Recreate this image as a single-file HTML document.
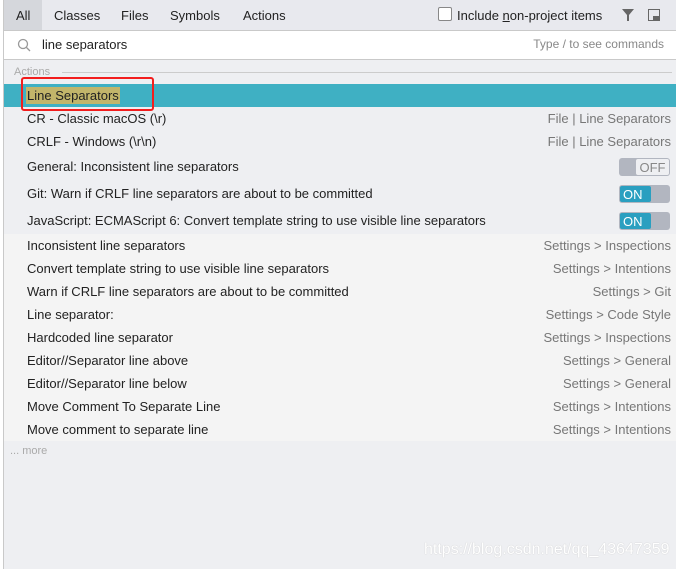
<!DOCTYPE html><html><head><style>
body{margin:0;width:676px;height:569px;overflow:hidden;background:#eeeff2;font-family:"Liberation Sans",sans-serif;font-size:13px;color:#222;position:relative}
.lb{position:absolute;left:0;top:0;width:3px;height:569px;background:#fff;border-right:1px solid #c9c9c9}
.top{position:absolute;left:4px;top:0;width:672px;height:30px;background:#e8e9ee;border-bottom:1px solid #c9c9c9}
.tab{position:absolute;top:8px}
.srch{position:absolute;left:4px;top:31px;width:672px;height:28px;background:#fff;border-bottom:1px solid #c9c9c9}
.r{position:absolute;left:4px;width:672px;height:23px;line-height:23px}
.r .t{position:absolute;left:23px}
.r .h{position:absolute;right:5px;color:#777}
.tg{position:absolute;right:6px;top:3px;width:51px;height:18px;border-radius:3px;background:#b2b6c0;font-size:13px;line-height:18px}
.on{position:absolute;left:1px;top:1px;width:31px;height:16px;background:#2a9fc0;color:#fff;padding-left:3px;box-sizing:border-box;border-radius:2px}
.off{position:absolute;right:1px;top:1px;width:33px;height:16px;background:#eeeff2;color:#888;text-align:center;border-radius:2px}
</style></head><body>
<div class="lb"></div>
<div class="top">
<div style="position:absolute;left:0;top:0;width:38px;height:30px;background:#d5d7dc"></div>
<span class="tab" style="left:12px">All</span><span class="tab" style="left:50px">Classes</span><span class="tab" style="left:117px">Files</span><span class="tab" style="left:166px">Symbols</span><span class="tab" style="left:239px">Actions</span>
<div style="position:absolute;left:434px;top:7px;width:12px;height:12px;border:1px solid #888;border-radius:2px;background:#fff"></div>
<span class="tab" style="left:453px">Include <u>n</u>on-project items</span>
<svg style="position:absolute;left:617px;top:8px" width="14" height="14"><path d="M1 1H13L8 7V13H6V7Z" fill="#666"/></svg>
<div style="position:absolute;left:644px;top:9px;width:10px;height:10px;border:1.5px solid #666"><div style="position:absolute;right:0;bottom:0;width:6px;height:4px;background:#666"></div></div>
</div>
<div class="srch">
<svg style="position:absolute;left:13px;top:7px" width="14" height="14"><circle cx="6" cy="6" r="4.5" fill="none" stroke="#999" stroke-width="1.3"/><path d="M9.5 9.5L13 13" stroke="#999" stroke-width="1.3"/></svg>
<span style="position:absolute;left:38px;top:6px">line separators</span>
<span style="position:absolute;right:12px;top:6px;font-size:12px;color:#888">Type / to see commands</span>
</div>
<span style="position:absolute;left:14px;top:66px;font-size:11px;color:#aaa">Actions</span>
<div style="position:absolute;left:62px;top:72px;width:610px;height:1px;background:#ccc"></div>
<div class="r" style="top:84px;background:#3fb0c3"><span class="t" style="background:#c2b56a;padding:0 1px;left:22px;line-height:17px;top:3px">Line Separators</span></div>
<div style="position:absolute;left:21px;top:77px;width:129px;height:30px;border:2px solid #f21d1d;border-radius:3px"></div>
<div class="r" style="top:107px"><span class="t">CR - Classic macOS (\r)</span><span class="h">File | Line Separators</span></div>
<div class="r" style="top:130px"><span class="t">CRLF - Windows (\r\n)</span><span class="h">File | Line Separators</span></div>
<div class="r" style="top:155px"><span class="t">General: Inconsistent line separators</span><div class="tg"><div class="off">OFF</div></div></div>
<div class="r" style="top:182px"><span class="t">Git: Warn if CRLF line separators are about to be committed</span><div class="tg"><div class="on">ON</div></div></div>
<div class="r" style="top:209px"><span class="t">JavaScript: ECMAScript 6: Convert template string to use visible line separators</span><div class="tg"><div class="on">ON</div></div></div>
<div style="position:absolute;left:4px;top:234px;width:672px;height:207px;background:#f4f4f4"></div>
<div class="r" style="top:234px"><span class="t">Inconsistent line separators</span><span class="h">Settings &gt; Inspections</span></div>
<div class="r" style="top:257px"><span class="t">Convert template string to use visible line separators</span><span class="h">Settings &gt; Intentions</span></div>
<div class="r" style="top:280px"><span class="t">Warn if CRLF line separators are about to be committed</span><span class="h">Settings &gt; Git</span></div>
<div class="r" style="top:303px"><span class="t">Line separator:</span><span class="h">Settings &gt; Code Style</span></div>
<div class="r" style="top:326px"><span class="t">Hardcoded line separator</span><span class="h">Settings &gt; Inspections</span></div>
<div class="r" style="top:349px"><span class="t">Editor//Separator line above</span><span class="h">Settings &gt; General</span></div>
<div class="r" style="top:372px"><span class="t">Editor//Separator line below</span><span class="h">Settings &gt; General</span></div>
<div class="r" style="top:395px"><span class="t">Move Comment To Separate Line</span><span class="h">Settings &gt; Intentions</span></div>
<div class="r" style="top:418px"><span class="t">Move comment to separate line</span><span class="h">Settings &gt; Intentions</span></div>
<span style="position:absolute;left:10px;top:445px;font-size:11px;color:#aaa">... more</span>
<span style="position:absolute;left:424px;top:541px;font-size:16px;color:#fff;text-shadow:0 0 1px #bbb">https://blog.csdn.net/qq_43647359</span>
</body></html>
